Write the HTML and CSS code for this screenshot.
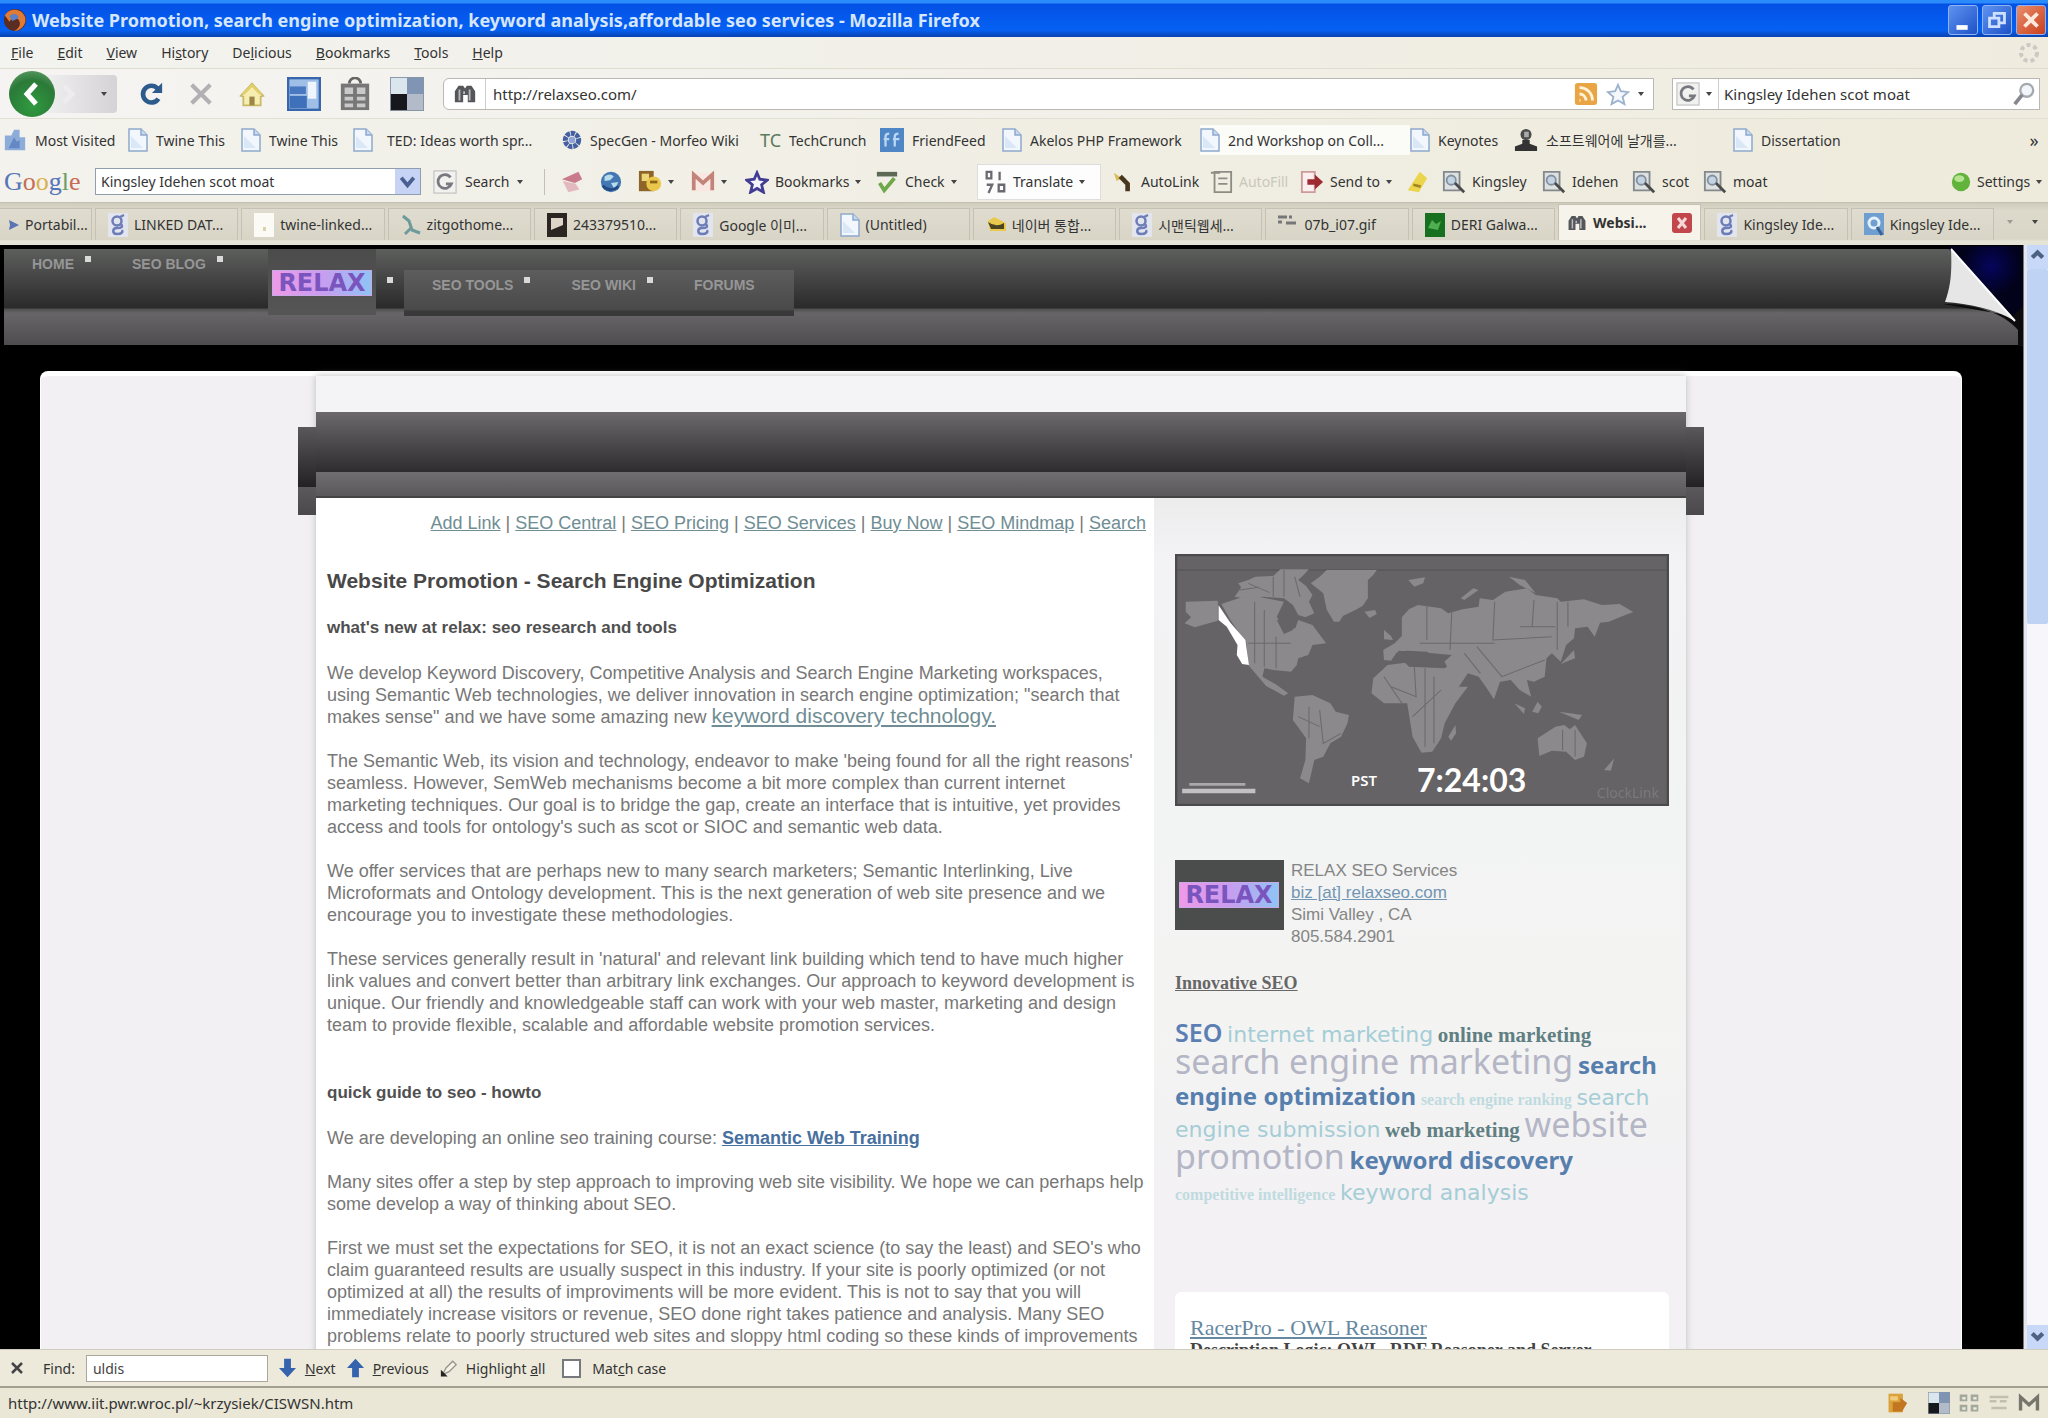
FILE: index.html
```html
<!DOCTYPE html>
<html lang="en">
<head>
<meta charset="utf-8">
<title>Website Promotion, search engine optimization - Mozilla Firefox</title>
<link rel="stylesheet" href="styles.css">
</head>
<body>
<svg class="defs" aria-hidden="true">
  <symbol id="page" viewBox="0 0 20 24"><path d="M1 1h12l6 6v16H1z" fill="#f2f7fd" stroke="#8fa9cc" stroke-width="1.5"/><path d="M13 1v6h6" fill="#c9daf0" stroke="#8fa9cc" stroke-width="1.5"/><path d="M3 20V8l12 12z" fill="#d9e7f7"/></symbol>
  <symbol id="gee" viewBox="0 0 20 24"><rect width="20" height="24" fill="#e3e5ee"/><circle cx="9" cy="8" r="4.500" fill="none" stroke="#6c7db8" stroke-width="2.500"/><path d="M12 4l4-2M13 11c2 3 1 4-4 4s-5 6 0 6 6-2 5-4" fill="none" stroke="#6c7db8" stroke-width="2.500"/></symbol>
  <symbol id="gbox" viewBox="0 0 26 26"><rect x="1" y="1" width="24" height="24" fill="#f1f1ef" stroke="#b4b4b4"/><path d="M19 8a7.500 7.500 0 1 0 1 7h-6" fill="none" stroke="#77797f" stroke-width="3"/></symbol>
  <symbol id="binoc" viewBox="0 0 26 22"><path d="M2 20V8l4-6h5l2 3 2-3h5l4 6v12h-8v-8h-5v8z" fill="#55565a"/><path d="M7 6v12M18 6v12M12 8v3" stroke="#b9b9bd" stroke-width="2"/></symbol>
  <symbol id="find" viewBox="0 0 26 26"><path d="M2 2h17v20H2z" fill="#dfe1e0" stroke="#83898c" stroke-width="2"/><circle cx="10" cy="11" r="5" fill="#c4d3e2" stroke="#8090a0" stroke-width="2"/><path d="M14 14l10 10" stroke="#4a4a4a" stroke-width="3"/></symbol>
  <symbol id="quad" viewBox="0 0 36 36"><rect width="36" height="36" fill="#8695a8"/><path d="M1 1h17v17H1z" fill="#dbe6ec"/><path d="M18 1h17v17H18z" fill="#7f95b3"/><path d="M1 18h17v17H1z" fill="#17181c"/><path d="M18 18h17v17H18z" fill="#b3bbc8"/></symbol>
</svg>

<div class="window">
  <header class="titlebar">
    <svg class="i26" viewBox="0 0 26 26"><circle cx="13" cy="13" r="12" fill="#5a2c22"/><path d="M2 8c4-8 18-9 22 2 2 8-5 15-12 15 7-4 8-9 4-13-4-3-8 0-9 3z" fill="#e07a35"/><path d="M7 9c4-5 10-2 10 2l-7 3z" fill="#5b80c8"/></svg>
    <h1>Website Promotion, search engine optimization, keyword analysis,affordable seo services - Mozilla Firefox</h1>
    <div class="winbtns">
      <button class="wb" aria-label="Minimize"><svg viewBox="0 0 30 30"><path d="M8 23h12" stroke="#fff" stroke-width="5"/></svg></button>
      <button class="wb" aria-label="Restore"><svg viewBox="0 0 30 30"><path d="M12 12V8h11v10h-5M7 13h10v9H7z" fill="none" stroke="#cfe0ff" stroke-width="3"/></svg></button>
      <button class="wb close" aria-label="Close"><svg viewBox="0 0 30 30"><path d="M8 8l14 14M22 8L8 22" stroke="#ffe9dc" stroke-width="4"/></svg></button>
    </div>
  </header>

  <nav class="menubar">
    <a href="#"><u>F</u>ile</a><a href="#"><u>E</u>dit</a><a href="#"><u>V</u>iew</a><a href="#">Hi<u>s</u>tory</a><a href="#">De<u>l</u>icious</a><a href="#"><u>B</u>ookmarks</a><a href="#"><u>T</u>ools</a><a href="#"><u>H</u>elp</a>
    <svg class="throb" viewBox="0 0 22 22"><circle cx="11" cy="11" r="8" fill="none" stroke="#cbc9c4" stroke-width="4" stroke-dasharray="4 3"/></svg>
  </nav>

  <div class="navbar">
    <div class="backfwd">
      <button class="back" aria-label="Back"><svg viewBox="0 0 46 46"><path d="M27 13L18 23l9 10" fill="none" stroke="#fff" stroke-width="5"/></svg></button>
      <button class="fwd" aria-label="Forward"><svg viewBox="0 0 30 30"><path d="M9 7l8 8-8 8" fill="none" stroke="#eeecee" stroke-width="5"/></svg></button>
      <span class="dd"></span>
    </div>
    <button class="tool small" aria-label="Reload"><svg viewBox="0 0 28 28"><path d="M22 19a9 9 0 1 1-1-11" fill="none" stroke="#2d5c8c" stroke-width="5"/><path d="M26 2v11H15z" fill="#2d5c8c"/></svg></button>
    <button class="tool small" aria-label="Stop"><svg viewBox="0 0 28 28"><path d="M4 4l20 20M24 4L4 24" stroke="#b1b1b3" stroke-width="4.500"/></svg></button>
    <button class="tool small" aria-label="Home"><svg viewBox="0 0 30 30"><path d="M2 17L15 3l13 14-3 1v10H5V18z" fill="#f6edb0" stroke="#c9b868" stroke-width="2"/><path d="M5 15L15 5l10 10" fill="none" stroke="#e2cf6c" stroke-width="3"/><path d="M12 18h6v10h-6z" fill="#9b8549"/></svg></button>
    <button class="tool" aria-label="Delicious"><svg viewBox="0 0 36 36"><rect x="1" y="1" width="34" height="34" fill="#9fbfe6" stroke="#3766ad" stroke-width="3"/><path d="M3 10h17v8H3z" fill="#4a78c0"/><path d="M22 5h9v18h-9z" fill="#eef5fc"/><path d="M3 20h18v13H3z" fill="#3f71bb"/></svg></button>
    <button class="tool" aria-label="Trunk"><svg viewBox="0 0 32 36"><path d="M10 7a6 6 0 0 1 12 0" fill="none" stroke="#666" stroke-width="3"/><path d="M1 7h30v28H1z" fill="#777"/><path d="M5 11h9v7H5zM18 11h9v7h-9zM5 21h9v4H5zM18 21h9v4h-9zM5 28h9v4H5zM18 28h9v4h-9z" fill="#c9c9c9"/></svg></button>
    <button class="tool" aria-label="Tag"><svg><use href="#quad"/></svg></button>
    <div class="field urlfield">
      <svg class="i26"><use href="#binoc"/></svg>
      <input type="text" aria-label="Address" value="http://relaxseo.com/">
      <svg class="i26" viewBox="0 0 26 26"><rect x="1" y="1" width="24" height="24" rx="3" fill="#e9a544"/><path d="M6 20h1M6 13a7 7 0 0 1 7 7M6 6a14 14 0 0 1 14 14" fill="none" stroke="#fff3dc" stroke-width="3"/></svg>
      <svg class="i26" viewBox="0 0 26 26"><path d="M13 3l3 7 8 1-6 5 2 8-7-4-7 4 2-8-6-5 8-1z" fill="#f4f8fc" stroke="#9db2cc" stroke-width="2"/></svg>
      <span class="dd"></span>
    </div>
    <div class="field searchfield">
      <svg class="i26"><use href="#gbox"/></svg><span class="dd"></span>
      <input type="text" aria-label="Search" value="Kingsley Idehen scot moat">
      <svg class="i26" viewBox="0 0 26 26"><circle cx="16" cy="9" r="7" fill="#f2f6fa" stroke="#a5a9b0" stroke-width="2.500"/><path d="M11 14L3 24" stroke="#84878e" stroke-width="4"/></svg>
    </div>
  </div>

  <nav class="bookmarks">
    <a href="#"><svg class="i26" viewBox="0 0 26 26"><path d="M2 8h7l3-6h6v8h6v14H2z" fill="#8eacda"/><path d="M6 22l6-12 3 5 3-2v9z" fill="#6488c4"/></svg>Most Visited</a>
    <a href="#"><svg class="i20"><use href="#page"/></svg>Twine This</a>
    <a href="#"><svg class="i20"><use href="#page"/></svg>Twine This</a>
    <a href="#" class="wide"><svg class="i20"><use href="#page"/></svg>TED: Ideas worth spr...</a>
    <a href="#"><svg class="i20" viewBox="0 0 24 24"><circle cx="12" cy="12" r="8" fill="none" stroke="#4560a0" stroke-width="6" stroke-dasharray="5 1"/><circle cx="12" cy="12" r="4" fill="#8ea4d4"/></svg>SpecGen - Morfeo Wiki</a>
    <a href="#"><span class="tc">TC</span>TechCrunch</a>
    <a href="#"><svg class="i26" viewBox="0 0 26 26"><rect width="26" height="26" fill="#4f87c6"/><path d="M6 20V9q0-3 4-3M4 12h6M16 20V9q0-3 4-3M14 12h7" fill="none" stroke="#b9d6f2" stroke-width="2.500"/></svg>FriendFeed</a>
    <a href="#"><svg class="i20"><use href="#page"/></svg>Akelos PHP Framework</a>
    <a href="#" class="lit"><svg class="i20"><use href="#page"/></svg>2nd Workshop on Coll...</a>
    <a href="#"><svg class="i20"><use href="#page"/></svg>Keynotes</a>
    <a href="#"><svg class="i26" viewBox="0 0 26 26"><circle cx="13" cy="7" r="6" fill="#4b4b4b"/><path d="M1 25v-5l8-3v-4h8v4l8 3v5z" fill="#333"/><path d="M11 4h5v6h-5z" fill="#a9a9a9"/></svg>소프트웨어에 날개를...</a>
    <a href="#"><svg class="i20"><use href="#page"/></svg>Dissertation</a>
    <button class="more">»</button>
  </nav>

  <div class="gbar">
    <span class="glogo"><b class="g1">G</b><b class="g2">o</b><b class="g3">o</b><b class="g1">g</b><b class="g4">l</b><b class="g2">e</b></span>
    <div class="field combo"><input type="text" aria-label="Google search" value="Kingsley Idehen scot moat"><button aria-label="Show history"><svg viewBox="0 0 20 20"><path d="M5 7l5 6 5-6" fill="none" stroke="#4a5f92" stroke-width="3"/></svg></button></div>
    <a href="#" class="gsearch"><svg class="i26"><use href="#gbox"/></svg>Search <i class="dd"></i></a>
    <span class="sep"></span>
    <a href="#"><svg class="i26" viewBox="0 0 26 26"><path d="M2 10L20 2l4 8-8 4z" fill="#c97b8b"/><path d="M3 12l14 3 4 6-12 3z" fill="#e3b9c0"/></svg></a>
    <a href="#"><svg class="i26" viewBox="0 0 26 26"><circle cx="13" cy="13" r="11" fill="#4478b5"/><path d="M6 7q6-4 10 0l-4 4-6 1zM13 14l8-1-4 8z" fill="#b9dcea"/><path d="M4 17q8 8 17 1" stroke="#244b81" fill="none" stroke-width="3"/></svg></a>
    <a href="#"><svg class="i26" viewBox="0 0 26 26"><path d="M1 1h16v22H1z" fill="#8e6428"/><path d="M4 4h8v8H4z" fill="#ecd678"/><circle cx="17" cy="15" r="8" fill="#eac64a"/><path d="M13 13h8" stroke="#8a6417" stroke-width="3"/></svg><i class="dd"></i></a>
    <a href="#"><svg class="i26" viewBox="0 0 26 26"><rect y="3" width="26" height="20" fill="#f9e7e2"/><path d="M3 22V5l10 9 10-9v17" fill="none" stroke="#c28379" stroke-width="4"/></svg><i class="dd"></i></a>
    <a href="#"><svg class="i26" viewBox="0 0 26 26"><path d="M13 3l3 7 8 1-6 5 2 8-7-4-7 4 2-8-6-5 8-1z" fill="#f4f4fc" stroke="#433c94" stroke-width="3"/></svg>Bookmarks<i class="dd"></i></a>
    <a href="#"><svg class="i26" viewBox="0 0 26 26"><path d="M2 2h22v5H2z" fill="#5d6b56"/><path d="M5 14l5 8L21 9" fill="none" stroke="#6da84a" stroke-width="4"/></svg>Check <i class="dd"></i></a>
    <a href="#" class="translate"><svg class="i26" viewBox="0 0 26 26"><path d="M4 2h5v7H4zM18 2v9M4 16h6l-4 9M17 16h6v7h-6z" fill="none" stroke="#6a6a70" stroke-width="2.500"/></svg>Translate <i class="dd"></i></a>
    <a href="#"><svg class="i26" viewBox="0 0 26 26"><path d="M3 3l9 6-6 3z" fill="#d9bd5a"/><path d="M10 7l8 8v8" fill="none" stroke="#48371f" stroke-width="5"/></svg>AutoLink</a>
    <a href="#" class="off"><svg class="i26" viewBox="0 0 26 26"><path d="M6 2h18v22H6zM2 3h10M10 9h10M10 15h10" fill="none" stroke="#8d8d86" stroke-width="2"/></svg>AutoFill</a>
    <a href="#"><svg class="i26" viewBox="0 0 26 26"><path d="M2 2h14v22H2z" fill="#fbeeee" stroke="#cc9a9a" stroke-width="2"/><path d="M8 10h8V5l9 8-9 8v-5H8z" fill="#9d2a30"/></svg>Send to<i class="dd"></i></a>
    <a href="#"><svg class="i26" viewBox="0 0 26 26"><path d="M3 22L16 2l8 7-9 15z" fill="#ecd44d"/><path d="M9 16l8 2" stroke="#a3871f" stroke-width="3"/></svg></a>
    <a href="#"><svg class="i26"><use href="#find"/></svg>Kingsley</a>
    <a href="#"><svg class="i26"><use href="#find"/></svg>Idehen</a>
    <a href="#"><svg class="i26"><use href="#find"/></svg>scot</a>
    <a href="#"><svg class="i26"><use href="#find"/></svg>moat</a>
    <a href="#"><svg class="i20" viewBox="0 0 24 24"><circle cx="12" cy="12" r="11" fill="#62b33c"/><ellipse cx="10" cy="8" rx="6" ry="4" fill="#b5e38f"/></svg>Settings<i class="dd"></i></a>
  </div>

  <nav class="tabs">
    <a href="#" class="first"><svg class="i14" viewBox="0 0 14 14"><path d="M0 7h5L4 2l10 5-10 5 1-5z" fill="#5a74b4"/></svg>Portabil...</a>
    <a href="#"><svg class="i20"><use href="#gee"/></svg>LINKED DAT...</a>
    <a href="#"><svg class="i20" viewBox="0 0 20 24"><path d="M0 0h20v24H0z" fill="#fbfaf5"/><path d="M9 14h3v4H9z" fill="#d8d2ae"/></svg>twine-linked...</a>
    <a href="#"><svg class="i20" viewBox="0 0 20 24"><path d="M2 3l6 5 3 9 8 3M4 21l6-6" fill="none" stroke="#6e9a9c" stroke-width="3"/></svg>zitgothome...</a>
    <a href="#"><svg class="i20" viewBox="0 0 20 24"><path d="M0 0h20v24H0z" fill="#2c2622"/><path d="M4 5h12v7L4 17z" fill="#dcd5c8"/></svg>243379510...</a>
    <a href="#"><svg class="i20"><use href="#gee"/></svg>Google 이미...</a>
    <a href="#"><svg class="i20"><use href="#page"/></svg>(Untitled)</a>
    <a href="#"><svg class="i20" viewBox="0 0 20 24"><path d="M2 8l6-4 12 6v8H4z" fill="#e8c94e"/><path d="M2 9q8 6 16 1v6H5z" fill="#4a4520"/></svg>네이버 통합...</a>
    <a href="#"><svg class="i20"><use href="#gee"/></svg>시맨틱웹세...</a>
    <a href="#"><svg class="i20" viewBox="0 0 20 24"><path d="M0 4h9M11 4h3M0 9h4M8 10h10" stroke="#77777a" stroke-width="3"/></svg>07b_i07.gif</a>
    <a href="#"><svg class="i20" viewBox="0 0 20 24"><path d="M0 0h20v24H0z" fill="#17701f"/><path d="M3 15l4-8 4 4 5-3-3 9z" fill="#4fae4f"/></svg>DERI Galwa...</a>
    <a href="#" class="on"><svg class="i20"><use href="#binoc"/></svg>Websi...<button class="x" aria-label="Close tab"><svg viewBox="0 0 20 20"><path d="M6 5l8 10M14 5L6 15" stroke="#f7d8d8" stroke-width="3"/></svg></button></a>
    <a href="#"><svg class="i20"><use href="#gee"/></svg>Kingsley Ide...</a>
    <a href="#"><svg class="i20" viewBox="0 0 20 24"><path d="M0 0h20v22H0z" fill="#6f9fd0"/><circle cx="10" cy="10" r="5" fill="none" stroke="#e4f0fb" stroke-width="3"/><path d="M13 14l5 8" stroke="#3a6292" stroke-width="3"/></svg>Kingsley Ide...</a>
    <span class="tabend"><i class="dd faint"></i><i class="dd"></i></span>
  </nav>

  <div class="view">
    <main class="site">
      <nav class="sitenav">
        <ul class="plain"><li><a href="#">HOME</a></li><li><a href="#">SEO BLOG</a></li></ul>
        <a href="#" class="brand"><span class="logo">RELAX</span></a>
        <ul class="boxed"><li><a href="#">SEO TOOLS</a></li><li><a href="#">SEO WIKI</a></li><li><a href="#">FORUMS</a></li></ul>
        <svg class="curl" viewBox="0 0 80 100">
          <defs><radialGradient id="night" cx="48" cy="20" r="30" gradientUnits="userSpaceOnUse"><stop offset="0" stop-color="#05055c"/><stop offset="1" stop-color="#02021a"/></radialGradient></defs>
          <path d="M6 0H80V82L6 3z" fill="url(#night)"/>
          <path d="M0 58C30 58 60 66 75 84V100H80V60L70 70z" fill="#0c0c0c"/>
          <path d="M8 3C9 25 8 40 2 56 26 58 50 62 72 75z" fill="#e6e6e6"/>
          <path d="M8 3L72 75" stroke="#fff" stroke-width="2"/>
        </svg>
      </nav>

      <div class="panel">
        <div class="center">
          <div class="band"></div>
          <div class="cols">
            <article>
              <p class="links"><a href="#">Add Link</a> | <a href="#">SEO Central</a> | <a href="#">SEO Pricing</a> | <a href="#">SEO Services</a> | <a href="#">Buy Now</a> | <a href="#">SEO Mindmap</a> | <a href="#">Search</a></p>
              <h2>Website Promotion - Search Engine Optimization</h2>
              <h3>what's new at relax: seo research and tools</h3>
              <p>We develop Keyword Discovery, Competitive Analysis and Search Engine Marketing workspaces,<br>using Semantic Web technologies, we deliver innovation in search engine optimization; "search that<br>makes sense" and we have some amazing new <a href="#" class="kd">keyword discovery technology.</a></p>
              <p>The Semantic Web, its vision and technology, endeavor to make 'being found for all the right reasons'<br>seamless. However, SemWeb mechanisms become a bit more complex than current internet<br>marketing techniques. Our goal is to bridge the gap, create an interface that is intuitive, yet provides<br>access and tools for ontology's such as scot or SIOC and semantic web data.</p>
              <p>We offer services that are perhaps new to many search marketers; Semantic Interlinking, Live<br>Microformats and Ontology development. This is the next generation of web site presence and we<br>encourage you to investigate these methodologies.</p>
              <p>These services generally result in 'natural' and relevant link building which tend to have much higher<br>link values and convert better than arbitrary link exchanges. Our approach to keyword development is<br>unique. Our friendly and knowledgeable staff can work with your web master, marketing and design<br>team to provide flexible, scalable and affordable website promotion services.</p>
              <h3 class="guide">quick guide to seo - howto</h3>
              <p>We are developing an online seo training course: <a href="#" class="train">Semantic Web Training</a></p>
              <p>Many sites offer a step by step approach to improving web site visibility. We hope we can perhaps help<br>some develop a way of thinking about SEO.</p>
              <p>First we must set the expectations for SEO, it is not an exact science (to say the least) and SEO's who<br>claim guaranteed results are usually suspect in this industry. If your site is poorly optimized (or not<br>optimized at all) the results of improviments will be more evident. This is not to say that you will<br>immediately increase visitors or revenue, SEO done right takes patience and analysis. Many SEO<br>problems relate to poorly structured web sites and sloppy html coding so these kinds of improvements</p>
            </article>
            <aside>
              <svg class="map" viewBox="95 72 1383 756" preserveAspectRatio="none">
                <rect x="95" y="72" width="1383" height="756" fill="#656365"/>
                <path d="M95 120H1478" stroke="#59575a" stroke-width="4"/>
                <rect x="98" y="75" width="1377" height="750" fill="none" stroke="#4c4a4d" stroke-width="7"/>
                <g fill="#8b898b">
                  <path d="M125 215L215 212V272L150 292 122 280 140 262 125 245z"/>
                  <path d="M225 222L300 195 350 205 400 215 380 260 400 300 432 295 440 270 480 285 518 340 480 345 468 375 440 385 436 405 420 425 370 420 345 415 340 440 380 465 412 490 400 497 350 468 300 405 295 340 250 270z"/>
                  <path d="M262 200L280 172 272 160 300 150 320 140 370 138 390 118H470L455 135 440 150 462 168 480 195 470 215 485 250 460 262 440 255 425 225 400 205 340 200 320 210z"/>
                  <path d="M475 160L500 140 520 120H660L650 135 635 150V205L620 228 600 240 565 258 555 275H540L520 240 510 190z"/>
                  <path d="M625 245L655 240 660 252 640 264zM748 150L795 142 790 160 765 170z"/>
                  <path d="M430 500L480 495 530 520 545 545 582 555 578 580 560 620 530 640 510 680 485 690 470 760 445 745 460 690 462 625 425 570z"/>
                  <path d="M690 405L740 398 750 410 850 415 870 400 885 470H915L880 520 850 580 840 625 815 665 785 668 760 620 745 520 680 520 645 490 650 445z"/>
                  <path d="M880 585L882 610 868 632 860 620zM680 300L700 318 705 330 680 328z"/>
                  <path d="M678 360L710 340 730 318 730 262 750 238 775 225 810 230 840 235 860 250 900 238 945 230 948 205 985 210 1020 185 1080 175 1105 195 1165 205 1175 215 1240 208 1290 225 1340 222 1378 246 1340 262 1310 275 1285 278 1270 320 1250 290 1215 295 1212 325 1190 345 1175 395 1150 370 1135 385 1130 440 1100 455 1080 450 1092 500 1060 480 1035 450 1005 455 988 508 965 470 945 440 915 430 885 478 865 430 850 395 800 365 745 362 715 368 700 392 680 390z"/>
                  <path d="M1212 360L1215 385 1175 402zM1045 520L1075 535 1072 552zM1095 545L1110 515 1122 530 1112 550zM1170 545L1235 555 1225 570zM1030 140L1075 150 1105 190 1060 165zM895 205L930 175 945 180 905 210z"/>
                  <path d="M1110 625L1160 590 1185 585 1200 598 1215 585 1248 640 1240 680 1215 690 1190 665 1150 662 1115 678z"/>
                  <path d="M1325 685L1315 722 1296 720z"/>
                </g>
                <g fill="none" stroke="#6c6a6c" stroke-width="3">
                  <path d="M275 180L330 172M300 160L360 188M400 120V200M430 140L445 200M318 215V400M345 240V410M378 320V415M300 340H420M370 140V200M470 530V625M500 540L510 640 560 610M440 560L500 590"/>
                  <path d="M795 415V650M765 410L770 500 700 470M820 440V640M680 440L730 520M840 480L760 560M800 225V330M870 240L865 360M780 340H990M990 215L985 330 1150 320M1060 290H1160M1100 210L1095 290M1165 215V360M905 370L950 430M940 350L1010 440 1130 390M1195 215V290M1180 600V660M1215 600V680"/>
                </g>
                <path d="M380 270L430 275 425 300 400 312zM720 362L800 368 870 375 835 408 750 405 715 385z" fill="#656365"/>
                <path d="M217 226L250 278 292 330 302 405 283 402 268 375 270 345 240 290 217 270z" fill="#fff"/>
                <path d="M135 763H292" stroke="#aaa8aa" stroke-width="8"/><path d="M115 783H320" stroke="#c2c0c2" stroke-width="14"/>
              </svg>
              <div class="clock"><span>PST</span><time>7:24:03</time><small>ClockLink</small></div>
              <div class="card">
                <span class="thumb"><span class="logo">RELAX</span></span>
                <address>RELAX SEO Services<br><a href="#">biz [at] relaxseo.com</a><br>Simi Valley , CA<br>805.584.2901</address>
              </div>
              <p class="inno"><a href="#">Innovative SEO</a></p>
              <p class="cloud">
                <a href="#" class="c1">SEO</a> <a href="#" class="c2">internet marketing</a> <a href="#" class="c3">online marketing</a><br>
                <a href="#" class="c4">search engine marketing</a> <a href="#" class="c5">search<br>engine optimization</a> <a href="#" class="c6">search engine ranking</a> <a href="#" class="c2">search<br>engine submission</a> <a href="#" class="c3">web marketing</a> <a href="#" class="c4">website<br>promotion</a> <a href="#" class="c5">keyword discovery</a><br>
                <a href="#" class="c6">competitive intelligence</a> <a href="#" class="c2">keyword analysis</a>
              </p>
              <div class="feed"><a href="#">RacerPro - OWL Reasoner</a><p>Description Logic: OWL, RDF Reasoner and Server</p></div>
            </aside>
          </div>
        </div>
      </div>
    </main>
    <div class="scroll"><span class="up"><svg viewBox="0 0 20 20"><path d="M5 12l5-5 5 5" fill="none" stroke="#4d6185" stroke-width="4"/></svg></span><span class="grip"></span><span class="down"><svg viewBox="0 0 20 20"><path d="M5 8l5 5 5-5" fill="none" stroke="#4d6185" stroke-width="4"/></svg></span></div>
  </div>

  <div class="findbar">
    <button class="fx" aria-label="Close find bar"><svg viewBox="0 0 14 14"><path d="M2 2l10 10M12 2L2 12" stroke="#444" stroke-width="2.500"/></svg></button>
    <label for="q">Find:</label><input id="q" type="text" value="uldis">
    <button><svg viewBox="0 0 20 24"><path d="M6 1h8v11h6L10 23 0 12h6z" fill="#3563ad"/></svg><span><u>N</u>ext</span></button>
    <button><svg viewBox="0 0 20 24"><path d="M6 23h8V12h6L10 1 0 12h6z" fill="#3563ad"/></svg><span><u>P</u>revious</span></button>
    <button><svg viewBox="0 0 20 24"><path d="M3 20l4-8 8-8 4 4-8 8z" fill="#f4f2e6" stroke="#96938a" stroke-width="1.500"/><path d="M1 14v8h8z" fill="#222"/></svg><span>Highlight <u>a</u>ll</span></button>
    <input type="checkbox" id="mc"><label for="mc">Mat<u>c</u>h case</label>
  </div>
  <footer class="status">
    <span>http://www.iit.pwr.wroc.pl/~krzysiek/CISWSN.htm</span>
    <svg class="note" viewBox="0 0 26 26"><path d="M3 2h17v22H3z" fill="#dba23c"/><path d="M8 12h9V7l8 6-6 10H8z" fill="#c2761f"/><path d="M5 5h9v5H5z" fill="#f0cc7c"/></svg>
    <svg><use href="#quad"/></svg>
    <svg viewBox="0 0 26 26"><path d="M2 3h9v8H2zM15 3h9v8h-9zM2 15h9v8H2zM15 15h9v8h-9z" fill="#a3a89c"/><path d="M5 6h4v3H5zM18 6h4v3h-4zM5 18h4v3H5zM18 18h4v3h-4z" fill="#e9e9da"/></svg>
    <svg viewBox="0 0 26 26"><path d="M2 6h22M2 11h8M14 11h8M4 19h18" stroke="#c2bfb0" stroke-width="3"/></svg>
    <svg viewBox="0 0 26 26"><path d="M3 22V6l10 9 10-9v16" fill="none" stroke="#77766c" stroke-width="4"/></svg>
  </footer>
</div>
</body>
</html>
```
FILE: styles.css
```css
* { box-sizing: border-box; }
body { margin: 0; font-family: "Noto Sans", "Noto Sans CJK KR", sans-serif; font-size: 14px; color: #333; }
a { color: inherit; text-decoration: none; }
button { border: 0; padding: 0; background: none; font: inherit; color: inherit; }
svg { display: block; flex: none; }
ul { list-style: none; margin: 0; padding: 0; }
.defs { position: absolute; width: 0; height: 0; }
.i26 { width: 24px; height: 24px; }
.i20 { width: 20px; height: 24px; }
.i14 { width: 14px; height: 14px; }
.dd { display: inline-block; flex: none; border: 3px solid transparent; border-top: 4px solid #444; border-bottom: 0; }
.dd.faint { opacity: .4; }

.window { display: flex; flex-direction: column; height: 100vh; background: #efeee6; overflow: hidden; }

.titlebar { display: flex; align-items: center; gap: 5px; height: 37px; flex: none; padding: 3px 2px 0 3px; background: linear-gradient(#2b8bfb 0 3px, #0450e4 4px, #0457ea 14px, #0561f2 30px, #0a45b8 36px); color: #d6e6fc; }
.titlebar h1 { flex: 1; margin: 0; font-size: 18px; line-height: 24px; font-weight: 700; white-space: nowrap; }
.winbtns { display: flex; gap: 4px; }
.wb { width: 30px; height: 30px; border: 1px solid #8fb4f0; border-radius: 3px; background: linear-gradient(135deg, #5f93f0, #1d52c8); }
.wb.close { background: linear-gradient(135deg, #ea8d6b, #c9401d); }

.menubar { display: flex; align-items: center; gap: 24px; height: 32px; flex: none; padding: 0 8px 0 11px; background: linear-gradient(90deg, #f3f3ef, #efebdf); border-bottom: 1px solid #dfdcd0; }
.throb { width: 22px; height: 22px; margin-left: auto; }

.navbar { display: grid; grid-template-columns: 108px 32px 32px 34px 34px 32px 36px 1fr 368px; column-gap: 18px; align-items: center; height: 50px; flex: none; padding: 0 8px 0 9px; background: linear-gradient(90deg, #f5f4f2, #efecdf); border-bottom: 1px solid #e2dfd3; }
.backfwd { display: flex; align-items: center; height: 38px; border-radius: 20px 4px 4px 20px; background: linear-gradient(90deg, #eee 40px, #d6d2d6); }
.back { width: 46px; height: 46px; border-radius: 50%; background: radial-gradient(circle at 50% 75%, #2f9a3f, #2b7a38 60%, #6fa577); }
.fwd { width: 30px; height: 30px; margin-right: 16px; }
.tool svg { width: 100%; height: 34px; }
.tool.small svg { height: 26px; }
.field { display: flex; align-items: center; background: #fff; border: 1px solid #b9b8b2; }
.field input { flex: 1; min-width: 0; border: 0; outline: 0; padding: 0; background: none; font: inherit; color: #333; }
.urlfield, .searchfield { height: 32px; gap: 8px; padding: 0 9px; font-size: 15px; }
.urlfield { border-radius: 6px 0 0 6px; }
.urlfield input { height: 30px; border-left: 1px solid #ccc; padding-left: 7px; }
.searchfield { padding: 0 3px; gap: 6px; }
.searchfield input { height: 30px; border-left: 1px solid #ccc; padding-left: 5px; }

.bookmarks, .gbar { display: grid; align-items: center; flex: none; background: linear-gradient(90deg, #f3f2ec, #eeebdc); white-space: nowrap; }
.bookmarks { grid-template-columns: 125px 113px 112px 209px 198px 120px 122px 198px 210px 104px 219px 1fr 20px; height: 42px; padding: 0 4px 0 3px; }
.bookmarks a, .gbar a { display: flex; align-items: center; gap: 8px; min-width: 0; height: 30px; }
.bookmarks a.wide { gap: 14px; }
.bookmarks a.lit { background: #fbfbf8; }
.tc { font-size: 18px; color: #5c7a5c; }
.more { font-size: 18px; }

.gbar { grid-template-columns: 91px 326px 123px 16px 39px 39px 53px 54px 130px 102px 134px 98px 91px 105px 37px 100px 90px 71px 1fr 97px; height: 41px; padding-left: 4px; }
.gbar a { gap: 6px; }
.glogo { font: 26px/30px "Liberation Serif", serif; }
.glogo b { font-weight: 400; }
.g1 { color: #5475b8; } .g2 { color: #c66b55; } .g3 { color: #d9b04e; } .g4 { color: #6a9c68; }
.combo { height: 27px; padding-left: 5px; border-color: #8f9fae; }
.combo button { width: 25px; height: 25px; background: #c7d3f4; }
.sep { width: 1px; height: 26px; background: #c4c1b4; }
.gbar a.gsearch { gap: 8px; padding-left: 12px; }
.gbar a.translate { height: 36px; margin-right: 10px; padding-left: 5px; background: #fdfdfd; border: 1px solid #ddd; }
.gbar .off { color: #c9c7bb; }

.tabs { display: grid; grid-template-columns: 95px repeat(13, 1fr) 51px; align-items: end; height: 43px; flex: none; padding-bottom: 5px; background: linear-gradient(#cfccbd, #dddacb 8px, #d9d6c7 36px, #e6e4d6 38px); border-top: 1px solid #c3c0b2; white-space: nowrap; }
.tabs > a { display: flex; align-items: center; gap: 6px; min-width: 0; height: 32px; margin-right: 3px; padding: 0 12px; background: linear-gradient(#e0ddd0, #d8d5c7); border: 1px solid #c5c2b4; border-bottom: 0; }
.tabs > .first { padding: 0 5px; border-left: 0; }
.tabs > .on { height: 36px; background: #f6f4ea; font-weight: 700; gap: 6px; padding: 0 8px; }
.x { width: 20px; height: 20px; margin-left: auto; border-radius: 3px; background: #c2474c; }
.tabend { display: flex; justify-content: space-around; align-self: center; }

.view { display: flex; flex: 1; min-height: 0; background: #000; }
.site { flex: 1; min-width: 0; overflow: hidden; padding-top: 4px; border-right: 1px solid #777; }
.scroll { display: flex; flex-direction: column; width: 24px; flex: none; background: #f6f6fb; border-left: 3px solid #e3e6ee; }
.scroll span { flex: none; background: #c8d8f8; }
.up, .down { height: 24px; }
.scroll .grip { height: 355px; border-radius: 2px; background: #bfd3f4; }
.down { margin-top: auto; }

.sitenav { position: relative; display: flex; align-items: flex-start; height: 96px; margin: 0 5px 0 4px; padding-left: 28px; background: linear-gradient(#5d5f5d, #2b2a2b 59px, #505050 60px, #676567 64px, #4e4c4e 96px); font: 700 14px/20px "Liberation Sans", sans-serif; color: #969696; }
.sitenav ul { display: flex; }
.sitenav li { position: relative; }
.sitenav li:not(:last-child)::after, .plain li:last-child::after, .brand::after { content: ""; position: absolute; top: 2px; right: -17px; width: 6px; height: 6px; background: #d9d9d9; }
.plain { gap: 58px; padding-top: 5px; width: 236px; }
.brand { position: relative; width: 108px; height: 66px; padding: 21px 4px 0; background: linear-gradient(#4b4c4b, #565556); }
.brand::after { top: 28px; }
.logo { display: block; width: 100px; height: 26px; border: 1px solid #c9a8e6; background: linear-gradient(90deg, #ee9ae8, #c99cf0 50%, #8fc4f5); color: #7a55bd; font: 700 24px/24px "DejaVu Sans", sans-serif; text-align: center; }
.boxed { gap: 58px; width: 390px; height: 46px; margin: 21px 0 0 28px; padding: 5px 28px; background: linear-gradient(#5c5d5c, #4a494a 40px, #3a393a 41px); }
.curl { position: absolute; right: -5px; top: -3px; width: 80px; height: 100px; }

.panel { margin: 26px 61px 0 40px; border-radius: 8px 8px 0 0; background: #f2f0f3; border: solid #fff; border-width: 5px 1px 0; }
.center { width: 1370px; max-width: 100%; margin: 0 auto; padding-top: 36px; box-shadow: 0 0 7px #bbb; background: #f4f3f5; }
.band { position: relative; height: 86px; background: linear-gradient(#6b696c, #2f2c30 60px, #706e71 60px, #5a585b 84px, #444 84px); }
.band::before, .band::after { content: ""; position: absolute; top: 15px; width: 18px; height: 88px; background: linear-gradient(#5a585b, #232124 60px, #5b595c 60px, #4a484b); }
.band::before { right: 100%; }
.band::after { left: 100%; }
.cols { display: flex; }
article { width: 838px; flex: none; padding: 14px 8px 0 11px; background: #fff; font: 18px/22px "Liberation Sans", sans-serif; color: #777; white-space: nowrap; }
article p { margin: 0 0 22px; }
article a, address a { text-decoration: underline; color: #6f8d93; }
article .links { margin-bottom: 35px; text-align: right; }
h2 { margin: 0 0 24px; font-size: 21px; line-height: 24px; color: #484848; }
h3 { margin: 0 0 23px; font-size: 17px; line-height: 22px; color: #505050; }
.guide { margin-top: 46px; }
article .kd { font-size: 21px; line-height: 18px; }
article .train { color: #47709f; font-weight: 700; }

aside { flex: 1; min-width: 0; padding: 56px 17px 0 21px; background: linear-gradient(#ececed, #f3f2f4 60px, #f2f3f3 300px, #f3f4f2 500px, #f3f1f4 720px); }
.map { width: 100%; height: 252px; }
.clock { position: relative; display: flex; align-items: center; height: 44px; margin: -48px 0 4px; padding: 0 10px 0 176px; color: #fff; }
.clock span { width: 66px; font-size: 15px; font-weight: 600; }
.clock time { font: 700 32px/34px Lato, sans-serif; }
.clock small { margin-left: auto; align-self: flex-end; font-size: 14px; color: #7b797b; }
.card { display: flex; gap: 7px; margin-top: 58px; }
.thumb { width: 109px; height: 70px; padding: 22px 4px; background: #4b4d4c; }
address { font: 17px/22px "Liberation Sans", sans-serif; color: #858585; }
address a { color: #7295b3; }
.inno { margin: 24px 0 26px; font: 700 18px/22px "Liberation Serif", serif; color: #666; }
.inno a { text-decoration: underline; }
.cloud { height: 188px; margin: 0; font: 18px/31px "Noto Sans", sans-serif; white-space: nowrap; }
.cloud a { line-height: 20px; }
.c1 { font-size: 25px; font-weight: 600; color: #5b7fb4; }
.c2 { font-family: "DejaVu Sans", sans-serif; font-size: 22px; color: #a4cdd6; }
.c3 { font-family: "Liberation Serif", serif; font-size: 21px; font-weight: 700; color: #5f7f82; }
.c4 { font-size: 34px; color: #b4b6c6; }
.c5 { font-size: 24px; font-weight: 700; color: #567fae; }
.c6 { font-family: "Liberation Serif", serif; font-size: 16px; font-weight: 700; color: #bfdbe0; }
.feed { height: 80px; margin-top: 84px; padding: 24px 15px; background: #fff; border-radius: 6px 6px 0 0; font: 22px/24px "Liberation Serif", serif; color: #6688a0; white-space: nowrap; }
.feed a { text-decoration: underline; }
.feed p { margin: 0; font-size: 18px; line-height: 20px; font-weight: 700; color: #444; }

.findbar, .status { display: flex; align-items: center; flex: none; background: #edeadb; }
.findbar { height: 39px; gap: 11px; padding-left: 10px; border-top: 1px solid #cfccc0; border-bottom: 2px solid #a3a091; }
.findbar button { display: flex; align-items: center; gap: 9px; }
.findbar button svg { width: 17px; height: 22px; }
.findbar .fx { margin-right: 8px; }
.findbar .fx svg { width: 14px; height: 14px; }
.findbar input[type="text"] { width: 182px; height: 27px; border: 1px solid #aaa89c; padding: 0 6px; font: inherit; color: #444; }
.findbar input[type="checkbox"] { appearance: none; width: 19px; height: 19px; margin: 0 0 0 6px; background: #fff; border: 2px solid #777a7c; }
.status { height: 30px; gap: 8px; padding: 0 8px; background: #eae7d6; font-size: 15px; }
.status span { margin-right: auto; }
.status svg { width: 22px; height: 22px; }
.status .note { margin-right: 12px; }
```
